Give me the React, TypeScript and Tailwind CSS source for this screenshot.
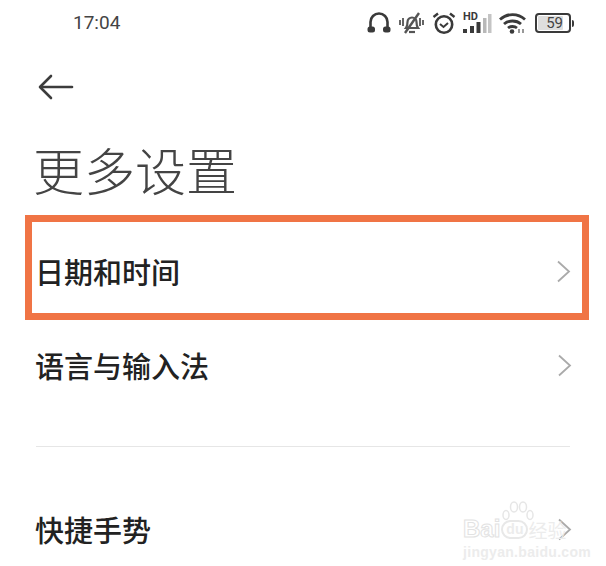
const cjk = { fontFamily: '"Noto Sans CJK SC", "Noto Sans", sans-serif' }
const roboto = { fontFamily: 'Roboto, sans-serif' }

function StatusIcons() {
  return (
    <div className="flex items-center text-[#3a3a3a]">
      {/* headphones */}
      <svg width="24" height="22" viewBox="0 0 24 22" fill="none" stroke="currentColor" className="mr-[7px]">
        <path d="M3.500 17V10a8.500 8.500 0 0 1 17 0v7" strokeWidth="2.600" />
        <rect x="0.500" y="14.500" width="7.500" height="6" rx="2.500" fill="currentColor" stroke="none" />
        <rect x="16" y="14.500" width="7.500" height="6" rx="2.500" fill="currentColor" stroke="none" />
      </svg>
      {/* muted bell */}
      <svg width="27" height="24" viewBox="0 0 27 24" fill="none" stroke="#555" strokeWidth="2.200" className="mr-[7px]">
        <path d="M8 17c1.500-2 1.500-4 1.500-6a4.500 4.500 0 0 1 9 0c0 2 0 4 1.500 6z" />
        <path d="M11 21h6" />
        <path d="M7 22 21 2" strokeWidth="2.400" />
        <path d="M2 9v5M5 7v8M22 7v8M25 9v5" strokeWidth="1.800" />
      </svg>
      {/* alarm */}
      <svg width="24" height="24" viewBox="0 0 24 24" fill="none" stroke="currentColor" className="mr-[6px]">
        <circle cx="12" cy="13.500" r="8.200" strokeWidth="2.600" />
        <path d="M8 13l3.500 3 4.500-4" strokeWidth="2" />
        <path d="M1.500 6 6 2.500M22.500 6 18 2.500" strokeWidth="2.400" />
      </svg>
      {/* signal */}
      <div className="relative mr-[7px] h-[24px] w-[30px]">
        <span className="absolute left-[1px] top-0 text-[11px] font-bold leading-[12px]" style={roboto}>HD</span>
        <svg width="30" height="24" viewBox="0 0 30 24" className="absolute left-0 top-0">
          <rect x="1" y="18" width="4" height="4" fill="currentColor" />
          <rect x="8" y="15" width="4" height="7" fill="currentColor" />
          <rect x="14.500" y="11" width="4" height="11" fill="currentColor" />
          <rect x="21" y="7" width="3.500" height="15" fill="#b8b8b8" />
          <rect x="26" y="3" width="3.500" height="19" fill="#c4c4c4" />
        </svg>
      </div>
      {/* wifi */}
      <svg width="27" height="22" viewBox="0 0 27 22" fill="none" stroke="currentColor" strokeWidth="2.800" className="mr-[9px]">
        <path d="M1 7.500c7-6.500 18-6.500 25 0" />
        <path d="M5 12c4.500-4 12.500-4 17 0" />
        <path d="M9 16c2.500-2 6.500-2 9 0" />
        <circle cx="13" cy="19.500" r="2.300" fill="currentColor" stroke="none" />
        <path d="M20 17v4M24 17v4" strokeWidth="1.500" stroke="#777" />
      </svg>
      {/* battery */}
      <div className="flex items-center">
        <div className="flex h-[20px] w-[36px] items-center rounded-[4px] border-2 border-[#3a3a3a] p-[1px]">
          <div className="flex h-full w-[25px] items-center justify-end rounded-[1px] bg-[#dedede] text-[15px] leading-none text-[#444]" style={roboto}>
            59
          </div>
        </div>
        <div className="ml-[1px] h-[7px] w-[2px] rounded-r-sm bg-[#3a3a3a]" />
      </div>
    </div>
  )
}

function Chevron() {
  return (
    <svg width="15" height="23" viewBox="0 0 15 23" fill="none" stroke="#aaa" strokeWidth="1.800">
      <path d="M2 1.500 13 11.500 2 21.500" />
    </svg>
  )
}

function Row({ label, className }: { label: string; className: string }) {
  return (
    <div className={`flex items-center justify-between ${className}`}>
      <span className="text-[29px] font-medium leading-[40px] text-[#222]" style={cjk}>{label}</span>
      <Chevron />
    </div>
  )
}

export default function App() {
  return (
    <div className="relative h-[566px] w-[606px] overflow-hidden bg-white">
      {/* Status bar */}
      <div className="flex items-center justify-between pl-[73px] pr-[32px] pt-[11px]">
        <span className="text-[19px] leading-[24px] text-[#444]" style={roboto}>17:04</span>
        <StatusIcons />
      </div>

      {/* Back arrow */}
      <div className="mt-[39px] pl-[38px]">
        <svg width="36" height="26" viewBox="0 0 36 26" fill="none" stroke="#3c3c3c" strokeWidth="2.600" strokeLinecap="round" strokeLinejoin="round">
          <path d="M34 13H3" />
          <path d="M13 2 2 13l11 11" />
        </svg>
      </div>

      {/* Title */}
      <h1 className="mt-[39px] pl-[33px] text-[51px] font-light leading-[60px] text-[#444]" style={cjk}>更多设置</h1>

      {/* Highlighted row */}
      <div className="ml-[25px] mr-[17px] mt-[16px] h-[105px] border-[7px] border-[#f07445] pl-[3px] pr-[11px] pt-[19px]">
        <Row label="日期和时间" className="h-[60px]" />
      </div>

      <div className="pl-[35px] pr-[34px]">
        <Row label="语言与输入法" className="mt-[24px] h-[42px]" />
        <div className="ml-[1px] mr-[2px] mt-[60px] h-px bg-[#e6e6e6]" />
        <Row label="快捷手势" className="mt-[62px] h-[40px]" />
      </div>

      {/* Baidu watermark */}
      <div className="absolute left-[463px] top-[501px] w-[112px] leading-none text-[#ececec]">
        <svg width="34" height="24" viewBox="0 0 34 24" fill="none" stroke="#e6e6e6" strokeWidth="1.500" className="ml-[38px]">
          <ellipse cx="5" cy="14" rx="3" ry="4.500" />
          <ellipse cx="13" cy="6" rx="3.500" ry="5" />
          <ellipse cx="22" cy="6" rx="3.500" ry="5" />
          <ellipse cx="29" cy="14" rx="3" ry="4.500" />
        </svg>
        <div className="-mt-[8px] flex items-center text-[24px] font-bold" style={{ fontFamily: '"Liberation Sans", "Noto Sans CJK SC", sans-serif' }}>
          <span className="text-transparent [-webkit-text-stroke:1px_#e2e2e2]">Bai</span>
          <span className="ml-[1px] rounded-full border-2 border-[#e8e8e8] px-[3px] pb-[1px] text-[14px]">du</span>
          <span className="text-[19px] font-normal" style={cjk}>经验</span>
        </div>
        <div className="mt-[4px] text-[14px] font-bold tracking-[0.3px]" style={{ fontFamily: '"Liberation Sans", sans-serif' }}>jingyan.baidu.com</div>
      </div>
    </div>
  )
}
